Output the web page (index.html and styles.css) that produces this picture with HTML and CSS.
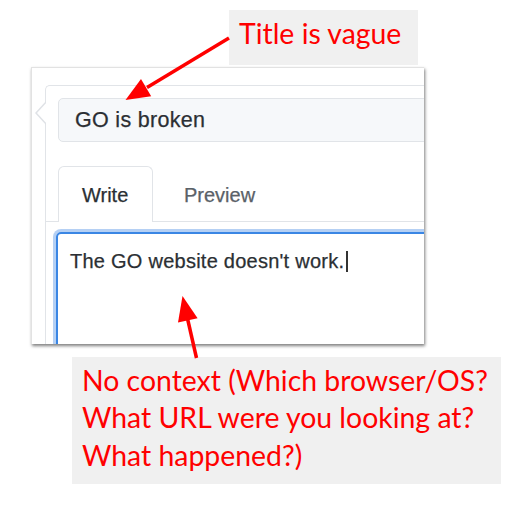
FILE: index.html
```html
<!DOCTYPE html>
<html lang="en">
<head>
<meta charset="utf-8">
<title>Issue annotation</title>
<link rel="stylesheet" href="styles.css">
</head>
<body>
<div class="page">
  <div class="note note-top">Title is vague</div>

  <div class="shot">
    <div class="comment">
      <div class="title-input">GO is broken</div>
      <div class="tabnav">
        <div class="tab tab-selected">Write</div>
        <div class="tab">Preview</div>
      </div>
      <div class="editor">The GO website doesn't work.<span class="cursor"></span></div>
    </div>
  </div>

  <div class="note note-bottom">No context (Which browser/OS?<br>What URL were you looking at?<br>What happened?)</div>

  <svg class="arrows" width="532" height="523" viewBox="0 0 532 523" aria-hidden="true">
    <line x1="229" y1="38" x2="147" y2="87.5" stroke="#ff0000" stroke-width="3.5"/>
    <polygon points="125.5,100 151.2,96.3 141,79.1" fill="#ff0000"/>
    <line x1="196.5" y1="358" x2="187.6" y2="319" stroke="#ff0000" stroke-width="3.5"/>
    <polygon points="182.5,296 197.6,318.3 178,322.5" fill="#ff0000"/>
  </svg>
</div>
</body>
</html>
```

FILE: styles.css
```css
html, body {
  margin: 0;
  padding: 0;
  background: #ffffff;
}

.page {
  position: relative;
  width: 532px;
  height: 523px;
  overflow: hidden;
  display: flex;
  flex-direction: column;
  align-items: flex-start;
  padding-top: 10px;
  box-sizing: border-box;
}

.note {
  box-sizing: border-box;
  background: #f0f0f0;
  color: #ff0000;
  font-family: "Lato", "Liberation Sans", sans-serif;
  font-size: 28.4px;
  line-height: 37.3px;
  white-space: nowrap;
}

.note-top {
  margin-left: 229px;
  width: 189px;
  height: 55px;
  padding: 5px 0 0 10px;
}

.note-bottom {
  margin-top: 13px;
  margin-left: 72px;
  width: 429px;
  height: 127px;
  padding: 5px 0 0 10px;
}

.shot {
  box-sizing: border-box;
  margin-top: 2px;
  margin-left: 31px;
  width: 393px;
  height: 277px;
  background: #ffffff;
  border: 1px solid #e2e2e2;
  border-right: none;
  border-bottom: none;
  box-shadow: 1px 2px 3px rgba(0, 0, 0, 0.5);
  overflow: hidden;
  font-family: "Liberation Sans", Arial, sans-serif;
  color: #24292e;
  -webkit-text-stroke: 0.25px currentColor;
}

.comment {
  position: relative;
  box-sizing: border-box;
  margin: 17px 0 0 13px;
  width: 430px;
  height: 320px;
  border: 1px solid #e1e4e8;
  border-right: none;
  border-bottom: none;
  border-radius: 5px 0 0 0;
  padding: 12px 0 0 12px;
}

.comment::before,
.comment::after {
  content: "";
  position: absolute;
  top: 15px;
  width: 0;
  height: 0;
  border-style: solid;
  border-width: 12px 11px 12px 0;
}

.comment::before {
  left: -11px;
  border-color: transparent #dfe2e6 transparent transparent;
}

.comment::after {
  left: -9.5px;
  border-color: transparent #ffffff transparent transparent;
}

.title-input {
  box-sizing: border-box;
  height: 44px;
  width: 420px;
  background: #f6f8fa;
  border: 1px solid #e1e4e8;
  border-radius: 5px;
  padding-left: 16px;
  display: flex;
  align-items: center;
  font-size: 21.5px;
  letter-spacing: 0.3px;
  color: #2b2f33;
}

.tabnav {
  display: flex;
  align-items: flex-end;
  margin: 24px 0 0 -12px;
  padding-left: 12px;
  border-bottom: 1px solid #e1e4e8;
  height: 55px;
}

.tab {
  box-sizing: border-box;
  height: 55px;
  padding: 0 23px;
  display: flex;
  align-items: center;
  padding-top: 2px;
  font-size: 20px;
  color: #5a6168;
  border: 1px solid transparent;
  border-bottom: none;
  margin-left: 7px;
}

.tab-selected {
  width: 95px;
  margin-left: 0;
  margin-bottom: -1px;
  height: 56px;
  background: #ffffff;
  border-color: #e1e4e8;
  border-radius: 6px 6px 0 0;
  color: #2b2f33;
}

.editor {
  box-sizing: border-box;
  margin: 10px 0 0 -2px;
  width: 420px;
  height: 200px;
  border: 2px solid #3a86e4;
  border-radius: 5px;
  box-shadow: 0 0 0 3px rgba(120, 170, 235, 0.55);
  padding: 16px 0 0 12px;
  font-size: 20px;
  line-height: 23px;
  letter-spacing: 0.25px;
  color: #2b2f33;
  white-space: nowrap;
}

.cursor {
  display: inline-block;
  width: 1.5px;
  height: 21px;
  margin-left: 2px;
  background: #333333;
  vertical-align: -4px;
}

.arrows {
  position: absolute;
  left: 0;
  top: 0;
  pointer-events: none;
}
```
